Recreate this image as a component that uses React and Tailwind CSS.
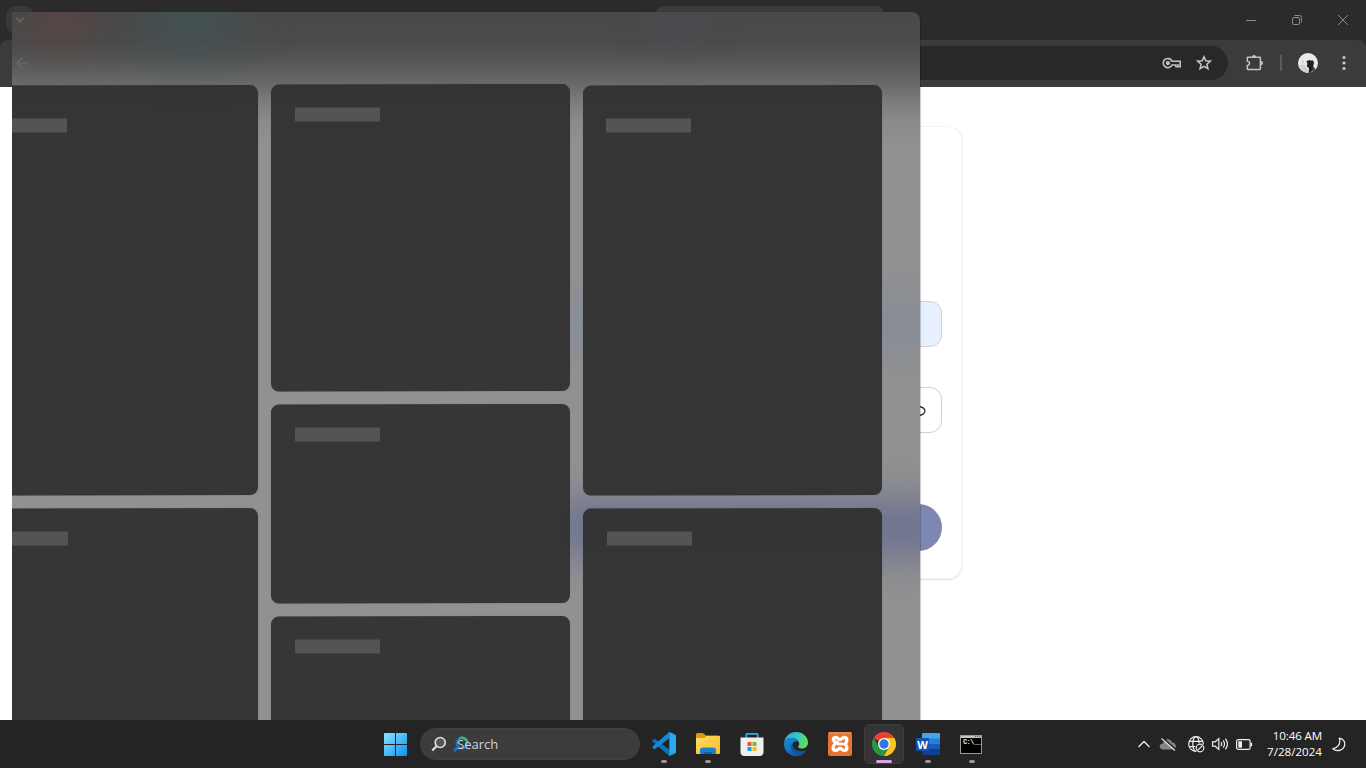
import React from "react";

function SkeletonCard({ className = "", barClass = "" }) {
  return (
    <div className={`shrink-0 translate-y-[0.3px] -skew-y-[0.12deg] bg-[#303030]/94 shadow-[0_0_1px_rgba(40,40,40,0.4)] ${className}`}>
      <div className={`h-[14px] bg-[#545454] ${barClass}`} />
    </div>
  );
}

function WidgetsPanel() {
  return (
    <section className="absolute left-[12px] top-[12px] z-10 flex h-[708px] w-[908px] overflow-hidden rounded-tr-[8px] bg-[linear-gradient(180deg,#494949_0px,#4b4b4b_30px,#545554_48px,#646464_65px,#6b6b6b_74px,#7c7c7c_90px,#8a8a8a_108px,#919191_135px,#919191_100%)] shadow-[1px_0_1px_rgba(0,0,0,0.2)]">
      <div className="absolute left-[20px] -top-[30px] h-[65px] w-[60px] rounded-full bg-[#64423c]/55 blur-[20px]" />
      <div className="absolute left-[130px] -top-[30px] h-[75px] w-[100px] rounded-full bg-[#3f5659]/60 blur-[24px]" />
      <div className="absolute left-[640px] -top-[20px] h-[55px] w-[50px] rounded-full bg-[#4f4c5a]/45 blur-[18px]" />
      <div className="absolute left-[540px] top-[284px] h-[56px] w-[390px] bg-[#838b99]/75 blur-[22px]" />
      <div className="absolute left-[540px] top-[489px] h-[54px] w-[400px] bg-[#686e90]/95 blur-[20px]" />

      <svg className="absolute left-[3px] top-[4px]" width="10" height="8" viewBox="0 0 10 8" fill="none" stroke="#6c6a6a" strokeWidth="1.5">
        <path d="M1.500 2 5 5.500 8.500 2" />
      </svg>
      <svg className="absolute left-[38px] top-[1px]" width="12" height="14" viewBox="0 0 12 14" fill="none" stroke="#5e4441" strokeWidth="1.300">
        <path d="M7 1C4 2.500 2 5 2 7.500s2 4 4 5.500" />
      </svg>
      <svg className="absolute left-[3px] top-[44px]" width="14" height="14" viewBox="0 0 14 14" fill="none" stroke="#666" strokeWidth="1.700">
        <path d="M13 7H2M7.500 1.500 2 7l5.500 5.500" />
      </svg>

      <div className="relative flex w-full items-start gap-[13px] pt-[72px]">
        <div className="flex w-[246px] flex-col gap-[13px] pt-px">
          <SkeletonCard className="h-[410px] rounded-r-[8px] pt-[33px]" barClass="w-[55px]" />
          <SkeletonCard className="h-[240px] rounded-tr-[8px] pt-[23px]" barClass="w-[56px]" />
        </div>
        <div className="flex w-[299px] flex-col gap-[13px]">
          <SkeletonCard className="h-[307px] rounded-[8px] pl-[24px] pt-[23px]" barClass="w-[85px]" />
          <SkeletonCard className="h-[199px] rounded-[8px] pl-[24px] pt-[23px]" barClass="w-[85px]" />
          <SkeletonCard className="h-[130px] rounded-t-[8px] pl-[24px] pt-[23px]" barClass="w-[85px]" />
        </div>
        <div className="flex w-[299px] flex-col gap-[13px] pt-px">
          <SkeletonCard className="h-[410px] rounded-[8px] pl-[23px] pt-[33px]" barClass="w-[85px]" />
          <SkeletonCard className="h-[240px] rounded-t-[8px] pl-[24px] pt-[23px]" barClass="w-[85px]" />
        </div>
      </div>
    </section>
  );
}

function TitleBar() {
  return (
    <div className="flex h-10 bg-[#2b2b2b] pl-[6px] pt-[6px]">
      <div className="h-[28px] w-[28px] rounded-[10px] bg-[#393939]" />
      <div className="ml-[621px] h-[34px] w-[230px] rounded-t-[9px] bg-[#3b3b3b]" />
      <div className="ml-auto flex h-[28px] items-center">
        <div className="flex w-[46px] justify-center">
          <svg width="10" height="10" viewBox="0 0 10 10" fill="none" stroke="#8b8b8b">
            <path d="M0 5.500h10" />
          </svg>
        </div>
        <div className="flex w-[46px] justify-center">
          <svg width="10" height="10" viewBox="0 0 10 10" fill="none" stroke="#8b8b8b">
            <rect x=".5" y="2.500" width="7" height="7" rx="1.500" />
            <path d="M2.500.5h5a2 2 0 0 1 2 2v5" />
          </svg>
        </div>
        <div className="flex w-[46px] justify-center">
          <svg width="10" height="10" viewBox="0 0 10 10" fill="none" stroke="#8b8b8b">
            <path d="m0 0 10 10M10 0 0 10" />
          </svg>
        </div>
      </div>
    </div>
  );
}

function Toolbar() {
  return (
    <div className="h-[47px] bg-[#2b2b2b]">
      <div className="flex h-full items-center rounded-t-[8px] bg-[#3b3b3b] pb-px pl-[92px]">
        <div className="flex h-[34px] w-[1136px] items-center justify-end rounded-full bg-[#282828] pr-[16px]">
          <svg width="20" height="14" viewBox="0 0 20 14" fill="none" stroke="#c2c2c2" strokeWidth="1.600">
            <path d="M10 5.200h8.200v5.500h-4.300V9H10a4.600 4.600 0 1 1 0-3.800Z" />
            <path d="M16 10.500V8" />
            <circle cx="5.900" cy="7.100" r="1.300" fill="#c2c2c2" />
          </svg>
          <svg className="ml-[14px]" width="16" height="16" viewBox="0 0 16 16" fill="none" stroke="#c7c7c7" strokeWidth="1.500">
            <path d="m8 1.700 1.800 4.100 4.500.4-3.400 3 1 4.400L8 11.300l-3.900 2.300 1-4.400-3.400-3 4.500-.4Z" />
          </svg>
        </div>
        <svg className="ml-[18px]" width="18" height="18" viewBox="0 0 18 18" fill="none" stroke="#c4c4c4" strokeWidth="1.500">
          <path d="M2 3.200h11.700c.4 0 .7.300.7.700v10.900c0 .4-.3.700-.7.700H2c-.4 0-.7-.3-.7-.7v-3.100c3-.8 3-4 0-4.700V3.900c0-.4.300-.7.700-.7Z" />
          <path fill="#c4c4c4" stroke="none" d="M6 3a2 2 0 0 1 4 0ZM15 7a2 2 0 0 1 0 4.200Z" />
        </svg>
        <div className="ml-[16px] h-4 w-[2px] bg-[#5b5b5b]" />
        <svg className="ml-[16px]" width="20" height="20" viewBox="0 0 20 20">
          <circle cx="10" cy="10" r="10" fill="#e9e9e9" />
          <path d="M2 12c3-1 5 0 8 4l1 4c-5 0-8-3-9-8Z" fill="#cfcfcf" />
          <circle cx="5" cy="9" r="1.300" fill="#d2d2d2" />
          <path d="m8.500 8 1.800-.4 1-.5 1.300.5 2.400-.2 1 2.400-.7 3 .2 1.500-1.200 3.500-2.100 2-1.500.1.300-4.700-2.200-2 .6-2.200Z" fill="#202020" />
          <path d="m14 16 2-2 1.500 2.500-3 2.500Z" fill="#414141" />
        </svg>
        <svg className="ml-[24px]" width="4" height="16" viewBox="0 0 4 16" fill="#c8c8c8">
          <circle cx="2" cy="2.500" r="1.600" />
          <circle cx="2" cy="8" r="1.600" />
          <circle cx="2" cy="13.500" r="1.600" />
        </svg>
      </div>
    </div>
  );
}

function LoginPage() {
  return (
    <main className="flex flex-1 justify-center bg-white pt-[39px]">
      <div className="flex h-[453px] w-[558px] flex-col rounded-[14px] border border-[#f5f5f5] bg-white px-[19px] pt-[174px] shadow-[0_1px_2px_rgba(0,0,0,0.12)]">
        <div className="h-[46px] shrink-0 rounded-[12px] border border-[#cdcfd9] bg-[#e7f0fe]" />
        <div className="mt-[40px] flex h-[46px] shrink-0 items-center justify-end rounded-[12px] border border-[#cdcfd9] bg-white pr-[15px] pt-px">
          <svg width="18" height="14" viewBox="0 0 18 14" fill="none" stroke="#1b1b1b" strokeWidth="1.200">
            <path d="M1 7c2-3 5-4.700 8-4.700 4.500 0 8 2 8 4.700s-3.500 4.700-8 4.700C6 11.700 3 10 1 7Z" />
          </svg>
        </div>
        <div className="mt-[71px] h-[47px] shrink-0 rounded-full bg-[#7e86b2]" />
      </div>
    </main>
  );
}

function AppSlot({ children, running, active }) {
  return (
    <div className="flex h-full w-[44px] items-center justify-center">
      <div className={`relative flex h-[40px] w-[40px] items-center justify-center rounded-[5px] ${active ? "border border-[#3e3e3e] bg-[#343434]" : ""}`}>
        {children}
        {running && <span className="absolute bottom-px h-[3px] w-[6px] rounded-full bg-[#979797]" />}
        {active && <span className="absolute bottom-0 h-[3px] w-[16px] rounded-full bg-[#dda0e4]" />}
      </div>
    </div>
  );
}

function WindowsLogo() {
  return (
    <svg width="23" height="23" viewBox="0 0 23 23">
      <defs>
        <linearGradient id="win" x1="0" y1="0" x2="1" y2="1">
          <stop stopColor="#8ce2ff" />
          <stop offset="1" stopColor="#0a93f5" />
        </linearGradient>
      </defs>
      <path fill="url(#win)" d="M0 1q0-1 1-1h10v11H0ZM12 0h10q1 0 1 1v10H12ZM0 12h11v11H1q-1 0-1-1ZM12 12h11v10q0 1-1 1H12Z" />
    </svg>
  );
}

function VsCode() {
  return (
    <svg width="24" height="24" viewBox="0 0 24 24">
      <path fill="#0b72b9" d="M.5 8.300 2 7a1 1 0 0 1 1.200 0L17.300 17.800V24L.5 9.600a1 1 0 0 1 0-1.300Z" />
      <path fill="#118bd6" d="M.5 15.700 2 17a1 1 0 0 0 1.200 0L17.300 6.300V0L.5 14.400a1 1 0 0 0 0 1.300Z" />
      <path fill="#2aa8f2" d="M17.300 0 23 2.500q1 .5 1 1.500v16q0 1-1 1.500L17.300 24q-.8 0-1.300-.6 1.300.8 1.300-1V1.600q0-1.600-1.300-1Q16.500 0 17.300 0Z" />
    </svg>
  );
}

function Explorer() {
  return (
    <svg width="24" height="22" viewBox="0 0 24 22">
      <defs>
        <linearGradient id="folder" x1="0" y1="0" x2="1" y2="1">
          <stop stopColor="#ffdc66" />
          <stop offset="1" stopColor="#fdbd26" />
        </linearGradient>
      </defs>
      <path fill="#d89a0b" d="M0 1.500Q0 0 1.500 0H7l3 2.500h12.500Q24 2.500 24 4v4H0Z" />
      <path fill="url(#folder)" d="M0 5h8l2.500-2H24v17q0 1-1 1H1q-1 0-1-1Z" />
      <path fill="#1683d1" d="M4 21v-3.500q0-3 3-3h10q3 0 3 3V21Z" />
      <path fill="#0b62a8" d="M7.500 21v-1q0-1 1-1h7q1 0 1 1v1Z" />
    </svg>
  );
}

function Store() {
  return (
    <svg width="24" height="24" viewBox="0 0 24 24">
      <path fill="none" stroke="#28aee8" strokeWidth="1.700" d="M6.300 6V2.600q0-.8.800-.8h9.800q.8 0 .8.800V6" />
      <path fill="#efefef" d="M.5 5.500h23V20q0 4-4 4h-15q-4 0-4-4Z" />
      <path fill="#f35325" d="M7.500 10h4v4h-4Z" />
      <path fill="#81bc06" d="M12.500 10h4v4h-4Z" />
      <path fill="#05a6f0" d="M7.500 15h4v4h-4Z" />
      <path fill="#ffba08" d="M12.500 15h4v4h-4Z" />
    </svg>
  );
}

function Edge() {
  return (
    <svg width="24" height="24" viewBox="0 0 24 24">
      <defs>
        <linearGradient id="edgeTop" x1="0" y1=".3" x2="1" y2=".5">
          <stop stopColor="#2aa9e0" />
          <stop offset=".5" stopColor="#31c4cd" />
          <stop offset="1" stopColor="#67df4c" />
        </linearGradient>
        <linearGradient id="edgeLow" x1="0" y1="0" x2=".8" y2="1">
          <stop stopColor="#1691df" />
          <stop offset="1" stopColor="#0d57a6" />
        </linearGradient>
      </defs>
      <path fill="url(#edgeTop)" d="M.1 11C.7 4.500 5.700 0 12 0c7 0 12 5 12 10.500 0 4-3 6-6 6-2.500 0-4-.8-4-1.600 0-.6 1.200-1 1.200-3C15.200 8.800 12 6 8 6 4 6 1 8 .1 11Z" />
      <path fill="url(#edgeLow)" d="M.1 11C1 8 4 6 7.600 6c3.500 0 6 1.800 7 3.800-3-1.500-6.600.5-6.600 4.500 0 5 6 7.700 13.500 5C19.500 22.200 16 24 12 24 5.300 24-.7 18.500.1 11Z" />
      <path fill="#11549a" d="M8.700 10.800c-3 3.500-1.500 10 4.300 12.900 3.500-.2 6.600-1.800 8.500-4.300.5-.8 0-1.200-.7-.8C14.500 21 7.500 17 8.700 10.800Z" />
    </svg>
  );
}

function Xampp() {
  return (
    <svg width="24" height="24" viewBox="0 0 24 24">
      <rect width="24" height="24" rx="2" fill="#e9732e" />
      <path fill="#d98a5e" d="M1 0h22v2H1Z" />
      <path fill="none" stroke="#fff" strokeWidth="3.400" strokeLinejoin="round" strokeLinecap="round" d="M9.500 10.500C5 10.500 4 5.500 7.500 5.500c2.300 0 2.500 2 4.500 2s2.200-2 4.500-2C20 5.500 19 10.500 17 12c2 1.500 3 6.500-.5 6.500-2.300 0-2.500-2-4.500-2s-2.200 2-4.500 2C4 18.500 5 13.500 7 12" />
      <path stroke="#fff" strokeWidth="3.200" strokeLinecap="round" d="M10 12h4.500" />
    </svg>
  );
}

function Chrome() {
  return (
    <svg width="24" height="24" viewBox="0 0 24 24">
      <path fill="#e84335" d="M12 12 1.600 6A12 12 0 0 1 22.400 6Z" />
      <path fill="#fcc521" d="M12 6h10.400A12 12 0 0 1 12 24l5.200-9Z" />
      <path fill="#279847" d="M1.600 6 6.800 15 12 18l3-1-3 7A12 12 0 0 1 1.600 6Z" />
      <path fill="#fcc521" d="m17.200 15-5.200 9a12 12 0 0 0 4-.7Z" />
      <circle cx="12" cy="12" r="6" fill="#fff" />
      <circle cx="12" cy="12" r="4.700" fill="#2e77e5" />
    </svg>
  );
}

function Word() {
  return (
    <svg width="24" height="22" viewBox="0 0 24 22">
      <path fill="#41a5ee" d="M6 1q0-1 1-1h16q1 0 1 1v5H6Z" />
      <path fill="#2b7cd3" d="M6 5.500h18V11H6Z" />
      <path fill="#185abd" d="M6 11h18v5.500H6Z" />
      <path fill="#103f91" d="M6 16.500h18V21q0 1-1 1H7q-1 0-1-1Z" />
      <rect y="5" width="13" height="13" rx="1" fill="#1453ad" />
      <text x="6.500" y="15.500" textAnchor="middle" fill="#fff" fontFamily="Open Sans, sans-serif" fontSize="11" fontWeight="700">W</text>
    </svg>
  );
}

function CommandPrompt() {
  return (
    <div className="mr-[2px] flex h-[19px] w-[22px] flex-col border border-[#999] bg-black">
      <div className="flex h-[2px] w-full shrink-0 justify-end gap-px bg-[#c6c6c6] pr-px">
        <span className="h-px w-px bg-[#555]" />
        <span className="h-px w-px bg-[#555]" />
        <span className="h-px w-px bg-[#555]" />
      </div>
      <span className="whitespace-nowrap pl-[2px] pt-[1px] font-['Liberation_Mono',monospace] text-[7px] font-bold leading-[7px] tracking-[-0.7px] text-[#eee]">C:\__</span>
    </div>
  );
}

function SearchBox() {
  return (
    <div className="ml-[13px] flex h-8 w-[220px] items-center rounded-full border border-[#424242] bg-[#3c3c3c] pl-[10px]">
      <svg width="16" height="16" viewBox="0 0 16 16" fill="none" stroke="#e4e4e4" strokeWidth="1.600">
        <circle cx="9.200" cy="6.500" r="5" fill="#555" />
        <path d="m5.500 10.200-4.300 4.300" strokeWidth="2" />
      </svg>
      <div className="relative ml-[10px] font-['Open_Sans','Noto_Sans',sans-serif] text-[13px] leading-[18px] text-[#d2d2d2]">
        <svg className="absolute -left-[4px] top-px" width="16" height="16" viewBox="0 0 16 16" fill="none">
          <circle cx="9" cy="7" r="5.200" stroke="#1575c9" strokeWidth="2.500" />
          <path d="M6.500 2.500a5.200 5.200 0 0 1 7.700 4.500" stroke="#39b878" strokeWidth="2.500" />
          <path d="m5.300 10.700-4.200 4.200" stroke="#1672c5" strokeWidth="3" />
        </svg>
        <span className="relative">Search</span>
      </div>
    </div>
  );
}

function Tray() {
  return (
    <div className="ml-auto flex h-full items-center pr-[20px]">
      <svg width="12" height="8" viewBox="0 0 12 8" fill="none" stroke="#eee" strokeWidth="1.300">
        <path d="M.5 7 6 1.500 11.500 7" />
      </svg>
      <svg className="ml-[9px]" width="18" height="14" viewBox="0 0 18 14">
        <path fill="#858585" d="M4 12.500c-4.500 0-4.500-6 0-6C5 1 12 1 13 5.500c5 0 5 7 1 7Z" />
        <path stroke="#242424" strokeWidth="1.600" d="m4 1.200 13 11.500" />
        <path stroke="#dedede" strokeWidth="1.200" d="m2.500 1.500 13.500 12" />
      </svg>
      <svg className="ml-[11px]" width="17" height="17" viewBox="0 0 17 17" fill="none" stroke="#eee" strokeWidth="1.200">
        <circle cx="8" cy="8" r="7.300" />
        <ellipse cx="8" cy="8" rx="3.200" ry="7.300" />
        <path d="M1.300 5.300h13.400M1.300 10.700H9" />
        <circle cx="12" cy="12" r="5" fill="#242424" stroke="none" />
        <circle cx="12" cy="12" r="3.800" />
        <path d="m9.400 14.600 5.200-5.200" />
      </svg>
      <svg className="ml-[7px]" width="17" height="14" viewBox="0 0 17 14" fill="none" stroke="#eee" strokeWidth="1.200">
        <path d="M.6 4.800h2.600L6.800 1.500v11L3.200 9.200H.6Z" />
        <path d="M9 5q1.300 2 0 4M11.200 3.300q2.600 3.700 0 7.400M13.400 1.700q4.200 5.300 0 10.600" />
      </svg>
      <svg className="ml-[7px]" width="17" height="11" viewBox="0 0 17 11" fill="none" stroke="#eee" strokeWidth="1.200">
        <rect x=".6" y=".6" width="13.500" height="9.800" rx="1.700" />
        <rect x="2.300" y="2.300" width="3.700" height="6.400" fill="#eee" stroke="none" />
        <path d="M15.300 3.700v3.600" strokeWidth="1.600" />
      </svg>
      <div className="ml-[12px] w-[57px] whitespace-nowrap text-right font-['Open_Sans','Noto_Sans',sans-serif] text-[11.600px] leading-4 text-white">
        <div className="tracking-[-0.150px]">10:46 AM</div>
        <div>7/28/2024</div>
      </div>
      <svg className="ml-[10px]" width="14" height="15" viewBox="0 0 14 15" fill="none" stroke="#eee" strokeWidth="1.200" strokeLinejoin="round">
        <path d="M7.200 1.100c3.700.4 6 3.400 5.500 6.800-.6 5-7.400 7.800-11.800 3.800C5.300 11.200 9.300 7 7.200 1.100Z" />
      </svg>
    </div>
  );
}

function Taskbar() {
  return (
    <footer className="flex h-12 shrink-0 items-center bg-[#242424] pl-[384px]">
      <WindowsLogo />
      <SearchBox />
      <div className="ml-[2px] flex h-full">
        <AppSlot running><VsCode /></AppSlot>
        <AppSlot running><Explorer /></AppSlot>
        <AppSlot><Store /></AppSlot>
        <AppSlot><Edge /></AppSlot>
        <AppSlot><Xampp /></AppSlot>
        <AppSlot active><Chrome /></AppSlot>
        <AppSlot running><Word /></AppSlot>
        <AppSlot running><CommandPrompt /></AppSlot>
      </div>
      <Tray />
    </footer>
  );
}

export default function App() {
  return (
    <div className="relative flex h-[768px] w-[1366px] flex-col overflow-hidden bg-white">
      <TitleBar />
      <Toolbar />
      <LoginPage />
      <WidgetsPanel />
      <Taskbar />
    </div>
  );
}
